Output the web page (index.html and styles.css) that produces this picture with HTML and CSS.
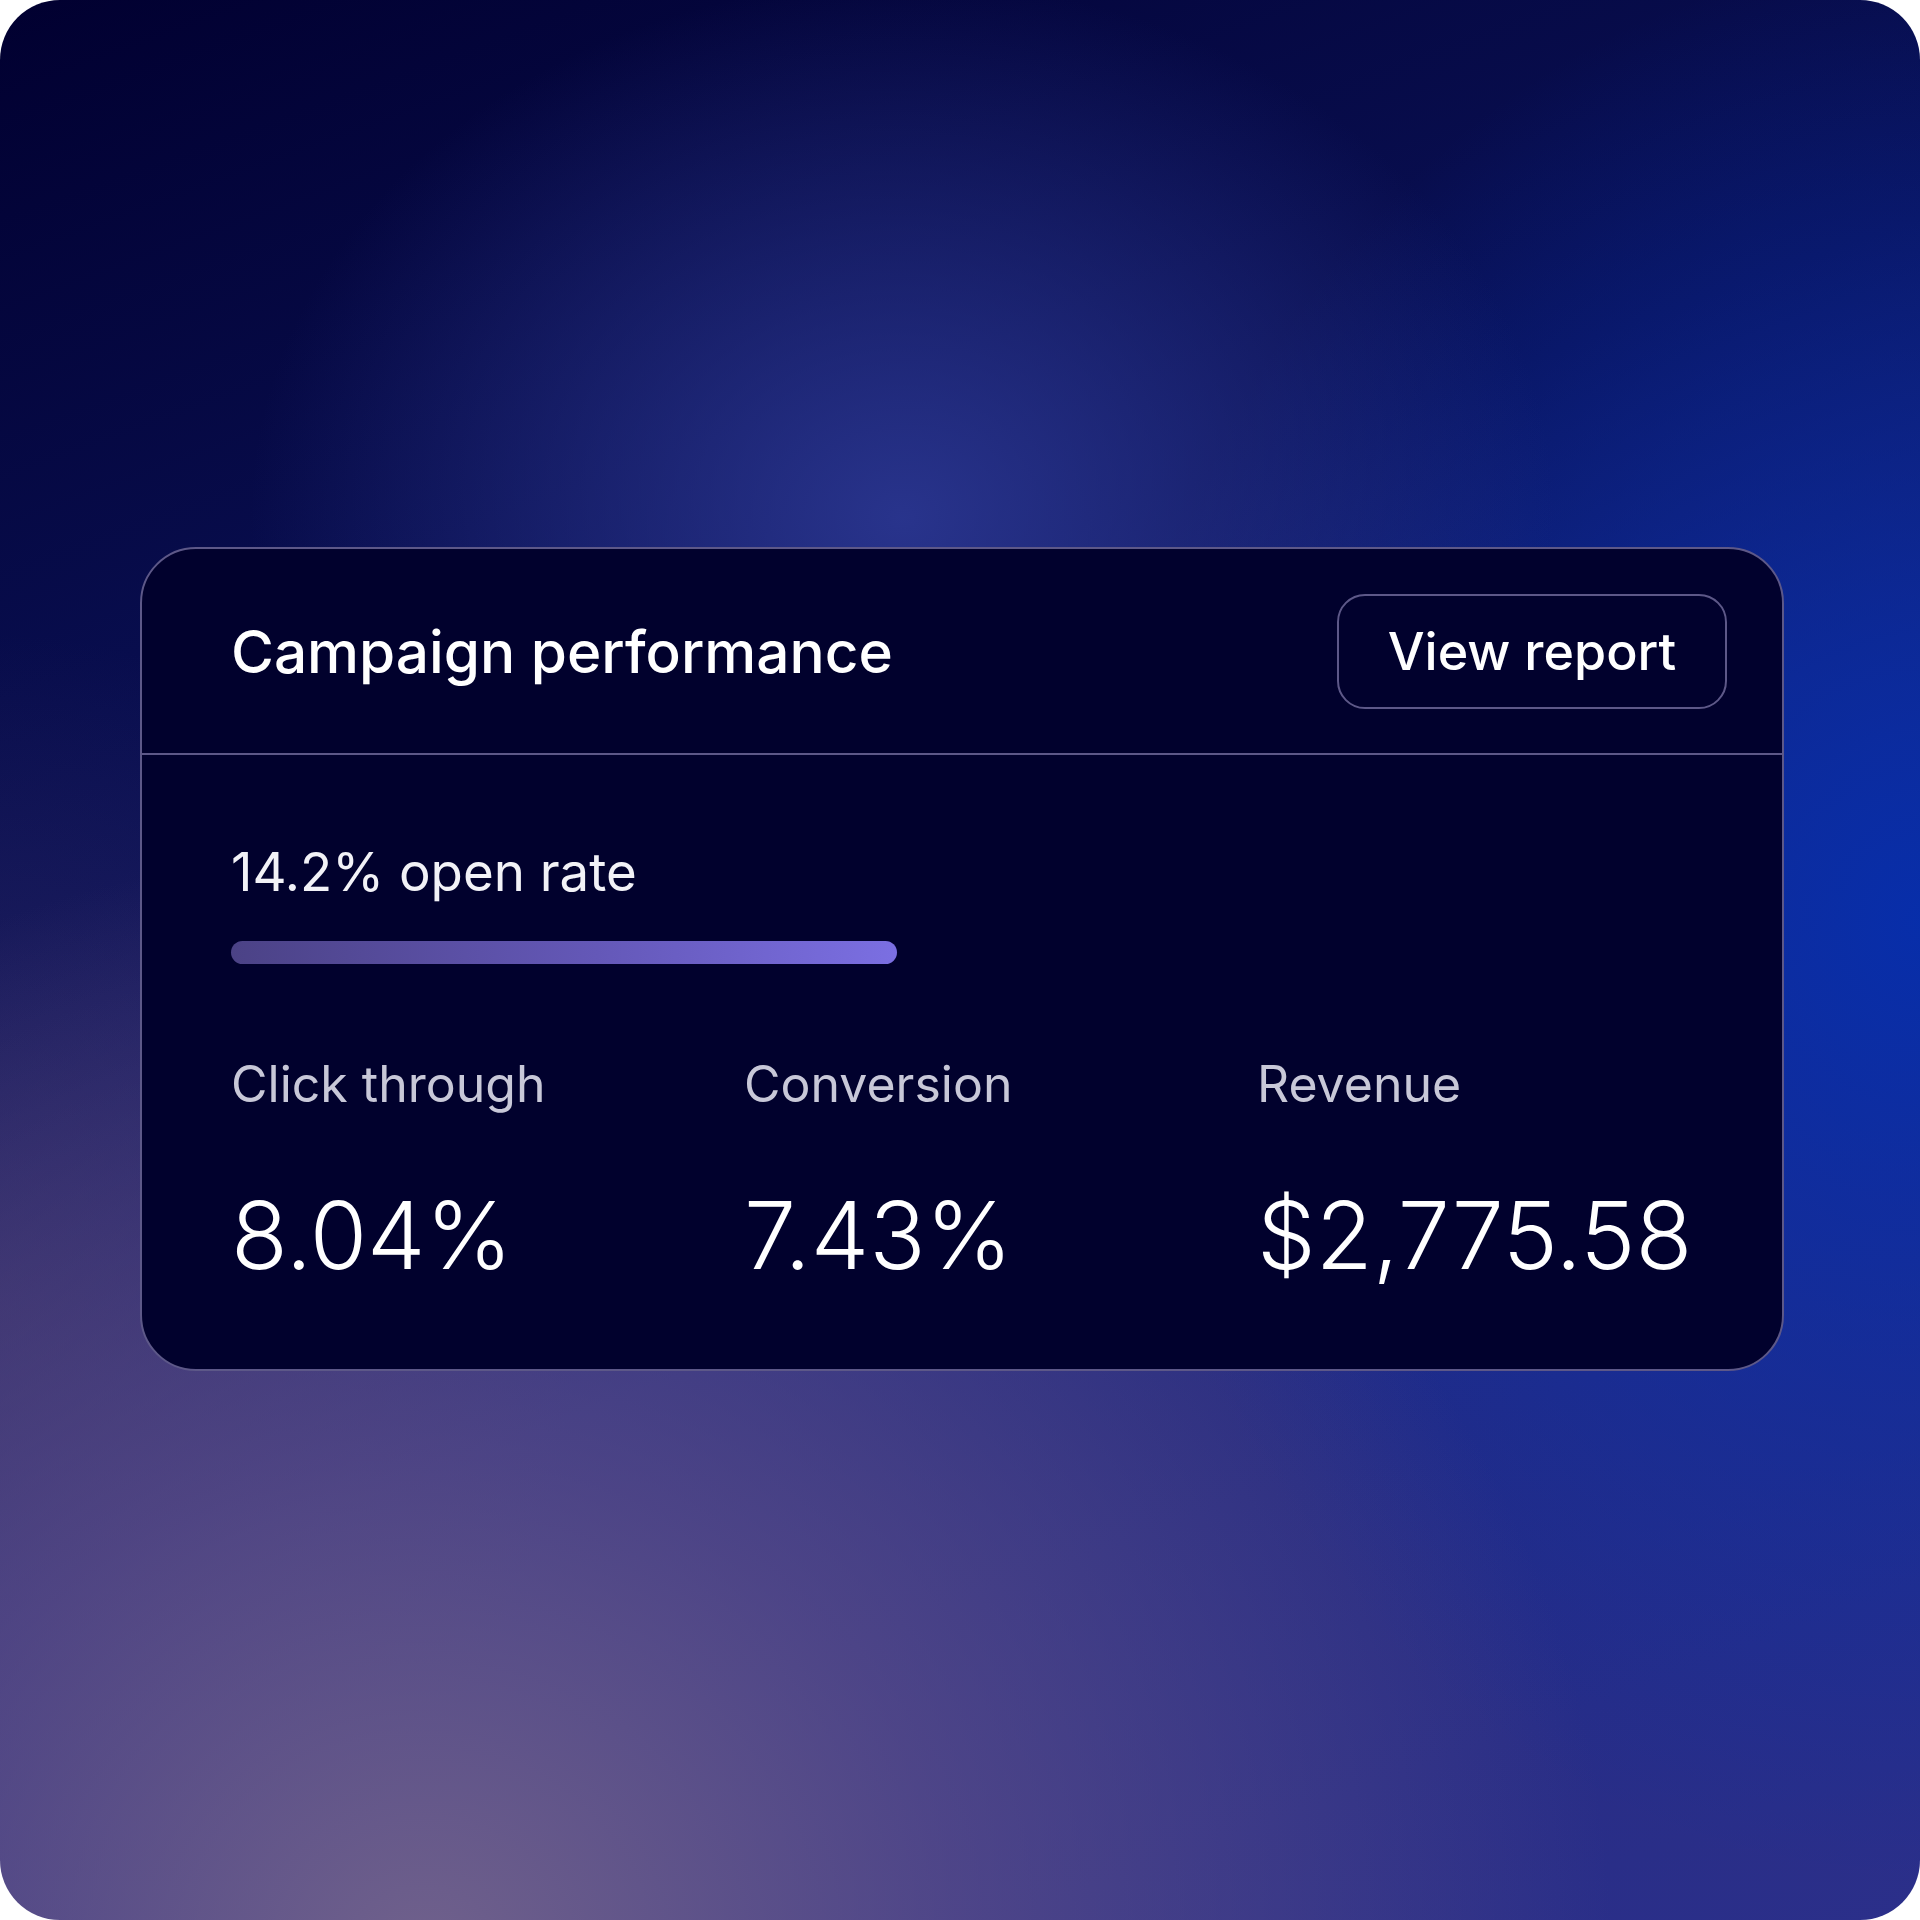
FILE: index.html
```html
<!DOCTYPE html>
<html lang="en">
<head>
<meta charset="utf-8">
<title>Campaign performance</title>
<link rel="stylesheet" href="styles.css">
</head>
<body>
<div class="frame">
  <section class="card">
    <header class="card-header">
      <h1 class="title">Campaign performance</h1>
      <button class="btn" type="button">View report</button>
    </header>
    <div class="card-body">
      <div class="open-rate">14.2% open rate</div>
      <div class="bar"></div>
      <div class="stats">
        <div class="stat">
          <div class="stat-label">Click through</div>
          <div class="stat-value">8.04%</div>
        </div>
        <div class="stat">
          <div class="stat-label">Conversion</div>
          <div class="stat-value">7.43%</div>
        </div>
        <div class="stat">
          <div class="stat-label">Revenue</div>
          <div class="stat-value">$2,775.58</div>
        </div>
      </div>
    </div>
  </section>
</div>
</body>
</html>
```

FILE: styles.css
```css
* { box-sizing: border-box; }
html, body { margin: 0; padding: 0; background: #ffffff; }
body { font-family: Inter, "Noto Sans", "Liberation Sans", sans-serif; }

.frame {
  width: 1920px;
  height: 1920px;
  border-radius: 60px;
  overflow: hidden;
  padding: 547px 136px 0 140px;
  background-color: #0b1052;
  background-image:
    radial-gradient(ellipse 62% 58% at 22% 102%, rgba(116,100,140,0.95) 0%, rgba(98,82,138,0.65) 45%, rgba(80,66,130,0) 100%),
    radial-gradient(ellipse 30% 35% at 0% 68%, rgba(64,50,100,0.55) 0%, rgba(64,50,100,0) 100%),
    radial-gradient(ellipse 34% 28% at 47% 27%, rgba(46,58,150,0.85) 0%, rgba(40,50,140,0) 100%),
    radial-gradient(ellipse 42% 50% at 100% 48%, rgba(6,46,172,0.95) 0%, rgba(6,46,172,0) 100%),
    linear-gradient(160deg, #010030 0%, #0a1156 35%, #22297e 62%, #2b2f8a 100%);
}

.card {
  width: 1644px;
  border: 2px solid #5d5888;
  border-radius: 56px;
  background: #01012d;
  overflow: hidden;
}

.card-header {
  height: 206px;
  display: flex;
  align-items: center;
  justify-content: space-between;
  padding: 0 55px 0 89px;
  border-bottom: 2px solid #5d5888;
}

.title {
  margin: 0;
  font-size: 58.5px;
  font-weight: 500;
  line-height: normal;
  color: #ffffff;
}

.btn {
  width: 390px;
  height: 115px;
  display: flex;
  align-items: center;
  justify-content: center;
  border: 2px solid #5d5888;
  border-radius: 28px;
  background: transparent;
  color: #ffffff;
  font-family: inherit;
  font-size: 52px;
  font-weight: 500;
  line-height: normal;
  padding: 0;
}

.card-body {
  padding: 86px 55px 79px 89px;
}

.open-rate {
  font-size: 52.8px;
  line-height: 62px;
  font-weight: 400;
  color: #f2f2f7;
}

.bar {
  margin-top: 38px;
  width: 666px;
  height: 23px;
  border-radius: 12px;
  background: linear-gradient(90deg, #4b4286 0%, #6458b8 55%, #7b6fe2 100%);
}

.stats {
  margin-top: 90px;
  display: grid;
  grid-template-columns: repeat(3, 513px);
}

.stat-label {
  font-size: 50px;
  line-height: 60px;
  font-weight: 400;
  color: #c8c8d8;
}

.stat-value {
  margin-top: 66px;
  font-size: 93px;
  line-height: 110px;
  font-weight: 300;
  color: #ffffff;
}
```
